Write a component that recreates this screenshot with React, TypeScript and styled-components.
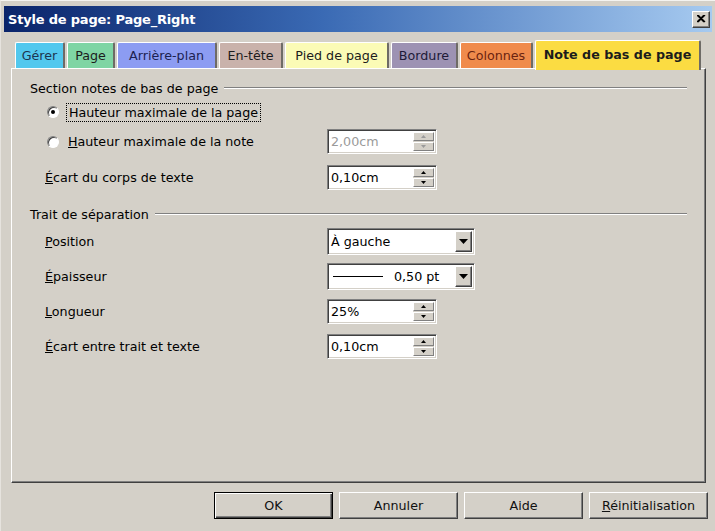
import React from "react";
import styled, { createGlobalStyle } from "styled-components";

const GlobalStyle = createGlobalStyle`
	html, body {
		margin: 0;
		padding: 0;
		background: #d4d0c8;
	}
	body {
		font-family: "DejaVu Sans", Tahoma, sans-serif;
		font-size: 12.7px;
		color: #000;
	}
`;

interface TabInfo {
	label: string;
	bg: string;
	color?: string;
	w: number;
	active?: boolean;
}

const tabs: TabInfo[] = [
	{ label: "Gérer", bg: "#52c8ee", color: "#1d3550", w: 50 },
	{ label: "Page", bg: "#7fd5a4", w: 48 },
	{ label: "Arrière-plan", bg: "#8c9cf2", color: "#1c2250", w: 100 },
	{ label: "En-tête", bg: "#c9b2ab", w: 64 },
	{ label: "Pied de page", bg: "#fbfbb6", w: 104 },
	{ label: "Bordure", bg: "#9d92b3", color: "#201a38", w: 67 },
	{ label: "Colonnes", bg: "#f08b4c", color: "#6a2410", w: 73 },
	{ label: "Note de bas de page", bg: "#fbdc42", w: 166, active: true },
];

const Window = styled.div`
	width: 715px;
	height: 531px;
	box-sizing: border-box;
	background: #d4d0c8;
	border-left: 1px solid #e6e3de;
	border-top: 1px solid #f4f3f0;
	display: flex;
	flex-direction: column;
	overflow: hidden;
`;

const TitleBar = styled.div`
	margin: 5px 3px 0 3px;
	height: 26px;
	background: linear-gradient(to right, #0a246a 0%, #3a6ab4 45%, #a6caf0 100%);
	display: flex;
	align-items: center;
	padding: 0 2px 0 4px;
`;

const Title = styled.div`
	flex: 1;
	color: #fff;
	font-weight: bold;
	font-size: 13px;
	letter-spacing: -0.2px;
`;

const CloseButton = styled.div`
	width: 18px;
	height: 17px;
	box-sizing: border-box;
	background: #d4d0c8;
	border: 1px solid;
	border-color: #fff #404040 #404040 #fff;
	box-shadow: inset -1px -1px #808080;
	display: flex;
	align-items: center;
	justify-content: center;
`;

const TabRow = styled.div`
	margin-top: 8px;
	height: 28px;
	padding-left: 14px;
	display: flex;
	align-items: flex-end;
	position: relative;
	z-index: 1;
`;

const Tab = styled.div<{ $bg: string; $color?: string; $w: number; $active?: boolean }>`
	width: ${(p) => p.$w}px;
	height: ${(p) => (p.$active ? 30 : 26)}px;
	margin-right: ${(p) => (p.$active ? 0 : 2)}px;
	margin-bottom: ${(p) => (p.$active ? -2 : 0)}px;
	box-sizing: border-box;
	background: ${(p) => p.$bg};
	color: ${(p) => p.$color || "#1c1c1c"};
	font-weight: ${(p) => (p.$active ? "bold" : "normal")};
	border-top: 1px solid #fff;
	border-left: 1px solid #fff;
	border-right: 2px solid #6e6b66;
	border-top-left-radius: 2px;
	border-top-right-radius: 2px;
	display: flex;
	align-items: center;
	justify-content: center;
	padding-bottom: ${(p) => (p.$active ? 3 : 0)}px;
	white-space: nowrap;
`;

const Panel = styled.div`
	margin: 0 9px 0 10px;
	height: 415px;
	box-sizing: border-box;
	border: 1px solid;
	border-color: #fff #404040 #404040 #fff;
	box-shadow: inset -1px -1px #808080;
	padding: 11px 18px 0 18px;
	display: flex;
	flex-direction: column;
`;

const SectionHeader = styled.div<{ $mt: number }>`
	margin-top: ${(p) => p.$mt}px;
	height: 16px;
	display: flex;
	align-items: center;
`;

const SectionLine = styled.div`
	flex: 1;
	margin-left: 6px;
	border-top: 1px solid #808080;
	border-bottom: 1px solid #fff;
`;

const Row = styled.div<{ $mt: number; $h: number }>`
	margin-top: ${(p) => p.$mt}px;
	height: ${(p) => p.$h}px;
	padding-left: 15px;
	display: flex;
	align-items: center;
`;

const Label = styled.div`
	width: 282px;
	flex-shrink: 0;
	display: flex;
	align-items: center;
`;

const RadioCircle = styled.span<{ $checked?: boolean }>`
	width: 12px;
	height: 12px;
	box-sizing: border-box;
	margin: 0 9px 0 2px;
	border-radius: 50%;
	background: #fff;
	border: 1px solid;
	border-color: #808080 #fff #fff #808080;
	box-shadow: inset 1px 1px #404040;
	display: flex;
	align-items: center;
	justify-content: center;
	&::after {
		content: "";
		display: ${(p) => (p.$checked ? "block" : "none")};
		width: 4px;
		height: 4px;
		border-radius: 50%;
		background: #000;
	}
`;

const FocusText = styled.span`
	outline: 1px dotted #000;
	outline-offset: 1px;
	padding: 0 1px;
`;

const Key = styled.span`
	text-decoration: underline;
`;

const Field = styled.div<{ $w: number; $h: number }>`
	width: ${(p) => p.$w}px;
	height: ${(p) => p.$h}px;
	box-sizing: border-box;
	background: #fff;
	border: 1px solid;
	border-color: #808080 #fff #fff #808080;
	box-shadow: inset 1px 1px #404040, inset -1px -1px #d4d0c8;
	padding: 2px;
	display: flex;
	align-items: stretch;
`;

const FieldText = styled.div<{ $disabled?: boolean }>`
	flex: 1;
	display: flex;
	align-items: center;
	padding-left: 1px;
	color: ${(p) => (p.$disabled ? "#9a9a9a" : "#000")};
`;

const SpinColumn = styled.div`
	width: 21px;
	display: flex;
	flex-direction: column;
	gap: 1px;
	background: #d4d0c8;
`;

const SpinButton = styled.div`
	flex: 1;
	box-sizing: border-box;
	background: #d4d0c8;
	border: 1px solid;
	border-color: #fff #808080 #808080 #fff;
	display: flex;
	align-items: center;
	justify-content: center;
`;

const DropButton = styled.div`
	width: 17px;
	box-sizing: border-box;
	background: #d4d0c8;
	border: 1px solid;
	border-color: #fff #404040 #404040 #fff;
	box-shadow: inset -1px -1px #808080;
	display: flex;
	align-items: center;
	justify-content: center;
`;

const LineSample = styled.div`
	width: 50px;
	margin: 0 11px 0 2px;
	border-top: 1px solid #000;
	align-self: center;
`;

const Footer = styled.div`
	margin-top: 9px;
	padding-right: 7px;
	display: flex;
	justify-content: flex-end;
	gap: 6px;
`;

const Button = styled.div<{ $default?: boolean }>`
	width: 119px;
	height: 27px;
	box-sizing: border-box;
	background: #d4d0c8;
	border: 1px solid;
	border-color: ${(p) => (p.$default ? "#000" : "#fff #404040 #404040 #fff")};
	box-shadow: ${(p) =>
		p.$default
			? "inset 1px 1px #fff, inset -1px -1px #404040, inset -2px -2px #808080"
			: "inset -1px -1px #808080"};
	display: flex;
	align-items: center;
	justify-content: center;
	color: #111;
`;

const Arrow: React.FC<{ dir: "up" | "down"; size?: number; color?: string }> = ({ dir, size = 5, color = "#000" }) => {
	const h = Math.ceil(size / 2);
	const points = dir === "up" ? `0,${h} ${size},${h} ${size / 2},0` : `0,0 ${size},0 ${size / 2},${h}`;
	return (
		<svg width={size} height={h} viewBox={`0 0 ${size} ${h}`}>
			<polygon points={points} fill={color} />
		</svg>
	);
};

const Spin: React.FC<{ value: string; disabled?: boolean }> = ({ value, disabled }) => (
	<Field $w={110} $h={25}>
		<FieldText $disabled={disabled}>{value}</FieldText>
		<SpinColumn>
			<SpinButton>
				<Arrow dir="up" color={disabled ? "#9a9a9a" : "#000"} />
			</SpinButton>
			<SpinButton>
				<Arrow dir="down" color={disabled ? "#9a9a9a" : "#000"} />
			</SpinButton>
		</SpinColumn>
	</Field>
);

const Combo: React.FC<{ children: React.ReactNode }> = ({ children }) => (
	<Field $w={148} $h={27}>
		<FieldText>{children}</FieldText>
		<DropButton>
			<Arrow dir="down" size={9} />
		</DropButton>
	</Field>
);

const App: React.FC = () => {
	return (
		<>
			<GlobalStyle />
			<Window>
				<TitleBar>
					<Title>Style de page: Page_Right</Title>
					<CloseButton>
						<svg width="9" height="8" viewBox="0 0 9 8">
							<path d="M1 0 L8 7 M0 0 L7 7 M8 0 L1 7 M7 0 L0 7" stroke="#000" strokeWidth="1.3" />
						</svg>
					</CloseButton>
				</TitleBar>

				<TabRow>
					{tabs.map((tab) => (
						<Tab key={tab.label} $bg={tab.bg} $color={tab.color} $w={tab.w} $active={tab.active}>
							{tab.label}
						</Tab>
					))}
				</TabRow>

				<Panel>
					<SectionHeader $mt={0}>
						Section notes de bas de page
						<SectionLine />
					</SectionHeader>
					<Row $mt={4} $h={24}>
						<Label>
							<RadioCircle $checked />
							<FocusText>Hauteur maximale de la page</FocusText>
						</Label>
					</Row>
					<Row $mt={5} $h={25}>
						<Label>
							<RadioCircle />
							<span>
								<Key>H</Key>auteur maximale de la note
							</span>
						</Label>
						<Spin value="2,00cm" disabled />
					</Row>
					<Row $mt={11} $h={25}>
						<Label>
							<span>
								<Key>É</Key>cart du corps de texte
							</span>
						</Label>
						<Spin value="0,10cm" />
					</Row>

					<SectionHeader $mt={16}>
						Trait de séparation
						<SectionLine />
					</SectionHeader>
					<Row $mt={6} $h={27}>
						<Label>
							<span>
								<Key>P</Key>osition
							</span>
						</Label>
						<Combo>À gauche</Combo>
					</Row>
					<Row $mt={8} $h={27}>
						<Label>
							<span>
								<Key>É</Key>paisseur
							</span>
						</Label>
						<Combo>
							<LineSample />
							0,50 pt
						</Combo>
					</Row>
					<Row $mt={9} $h={25}>
						<Label>
							<span>
								<Key>L</Key>ongueur
							</span>
						</Label>
						<Spin value="25%" />
					</Row>
					<Row $mt={10} $h={25}>
						<Label>
							<span>
								<Key>É</Key>cart entre trait et texte
							</span>
						</Label>
						<Spin value="0,10cm" />
					</Row>
				</Panel>

				<Footer>
					<Button $default>OK</Button>
					<Button>Annuler</Button>
					<Button>Aide</Button>
					<Button>
						<span>
							<Key>R</Key>éinitialisation
						</span>
					</Button>
				</Footer>
			</Window>
		</>
	);
};

export default App;
